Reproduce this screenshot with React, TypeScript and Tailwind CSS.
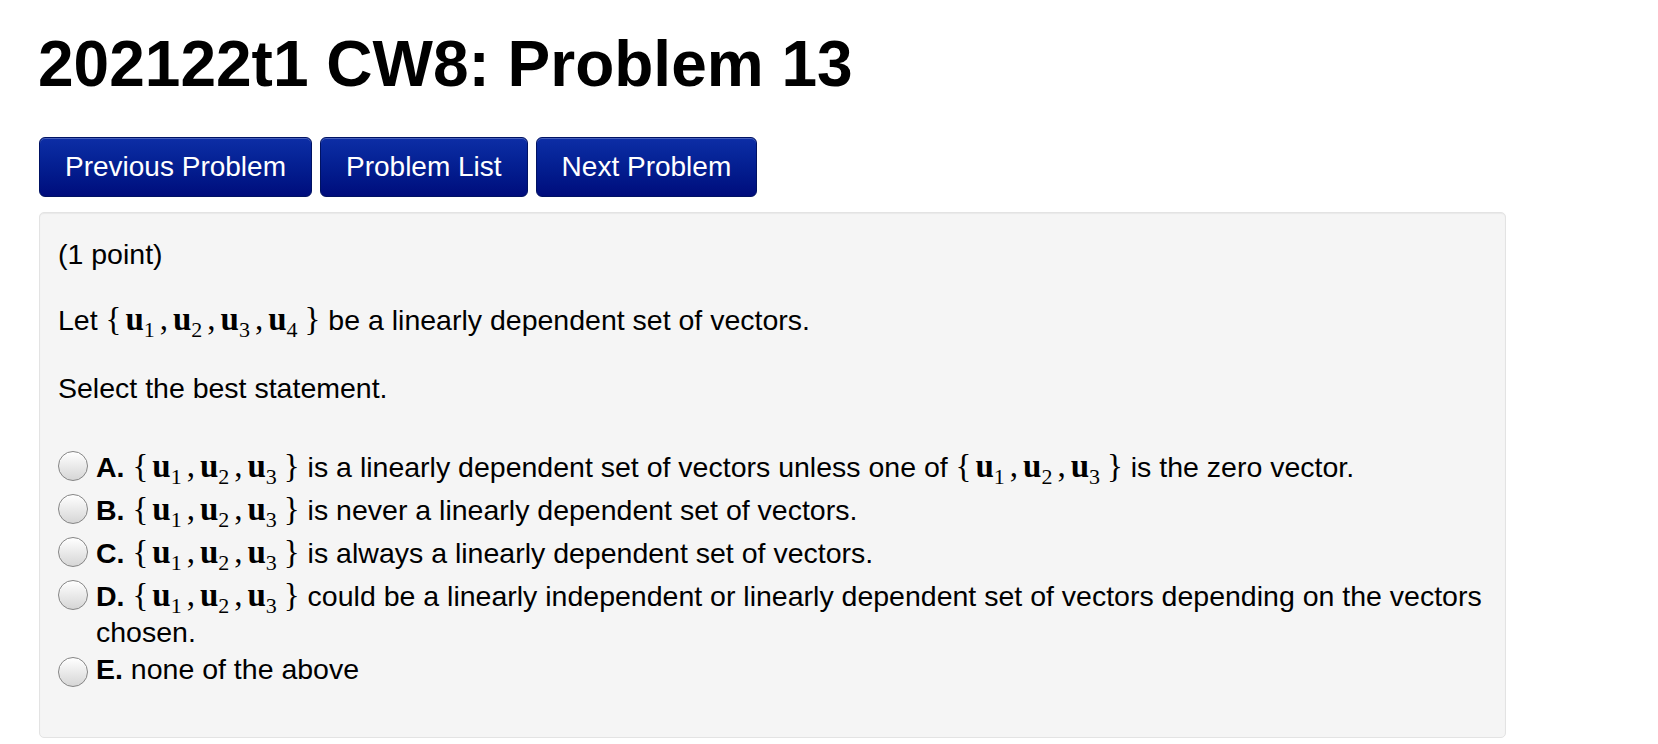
import type { ReactNode } from 'react';

const sans = "font-['Liberation_Sans','Helvetica',Arial,sans-serif]";

function Vec({ n }: { n: number }) {
  return (
    <>
      <b className="font-bold">u</b>
      <span className="relative top-[7px] text-[22px] leading-none font-normal">{n}</span>
    </>
  );
}

function MathSet({ count }: { count: number }) {
  const items = Array.from({ length: count }, (_, i) => i + 1);
  return (
    <span className="font-['Liberation_Serif','Times_New_Roman',serif] text-[33px] leading-[40px] whitespace-nowrap">
      {'{'}
      <span className="inline-block w-[4px]" />
      {items.map((n, i) => (
        <span key={n}>
          <Vec n={n} />
          {i < items.length - 1 && (
            <>
              <span className="ml-[5px]">,</span>
              <span className="inline-block w-[5px]" />
            </>
          )}
        </span>
      ))}
      <span className="inline-block w-[7px]" />
      {'}'}
    </span>
  );
}

function Option({ letter, children }: { letter: string; children: ReactNode }) {
  return (
    <div className="flex items-start gap-[8px]">
      <span className="mt-[5px] w-[30px] h-[30px] shrink-0 rounded-full border border-[#858585] bg-linear-to-b from-white to-[#d6d6d6] shadow-[inset_0_1px_1px_rgba(255,255,255,0.9)]" />
      <div className="flex-1 leading-[34px]">
        <b className="font-bold">{letter}.</b> {children}
      </div>
    </div>
  );
}

export default function App() {
  const buttons = ['Previous Problem', 'Problem List', 'Next Problem'];

  return (
    <div className={`${sans} min-h-screen bg-white text-black pl-[39px] pt-[28px]`}>
      <h1 className="text-[64px] font-bold leading-[72px] -ml-[1px]">
        202122t1 CW8: Problem 13
      </h1>

      <div className="mt-[37px] flex gap-[8px]">
        {buttons.map((b) => (
          <button
            key={b}
            type="button"
            className="h-[60px] px-[25px] rounded-[6px] border border-[#001263] bg-linear-to-b from-[#0d2ea6] to-[#000c7c] text-white text-[28px] leading-none shadow-[inset_0_1px_0_rgba(255,255,255,0.25)]"
          >
            {b}
          </button>
        ))}
      </div>

      <div className="mt-[15px] w-[1467px] h-[526px] rounded-[5px] border border-[#e3e3e3] bg-[#f5f5f5] shadow-[inset_0_1px_1px_rgba(0,0,0,0.05)] px-[18px] pt-[23px] text-[28.5px] leading-[36px]">
        <p>(1 point)</p>

        <p className="mt-[27px]">
          Let <MathSet count={4} /> be a linearly dependent set of vectors.
        </p>

        <p className="mt-[31px]">Select the best statement.</p>

        <div className="mt-[40px] flex flex-col gap-[3px]">
          <Option letter="A">
            <MathSet count={3} /> is a linearly dependent set of vectors unless one of <MathSet count={3} /> is
            the zero vector.
          </Option>
          <Option letter="B">
            <MathSet count={3} /> is never a linearly dependent set of vectors.
          </Option>
          <Option letter="C">
            <MathSet count={3} /> is always a linearly dependent set of vectors.
          </Option>
          <Option letter="D">
            <MathSet count={3} /> could be a linearly independent or linearly dependent set of vectors depending on
            the vectors chosen.
          </Option>
          <Option letter="E">none of the above</Option>
        </div>
      </div>
    </div>
  );
}
